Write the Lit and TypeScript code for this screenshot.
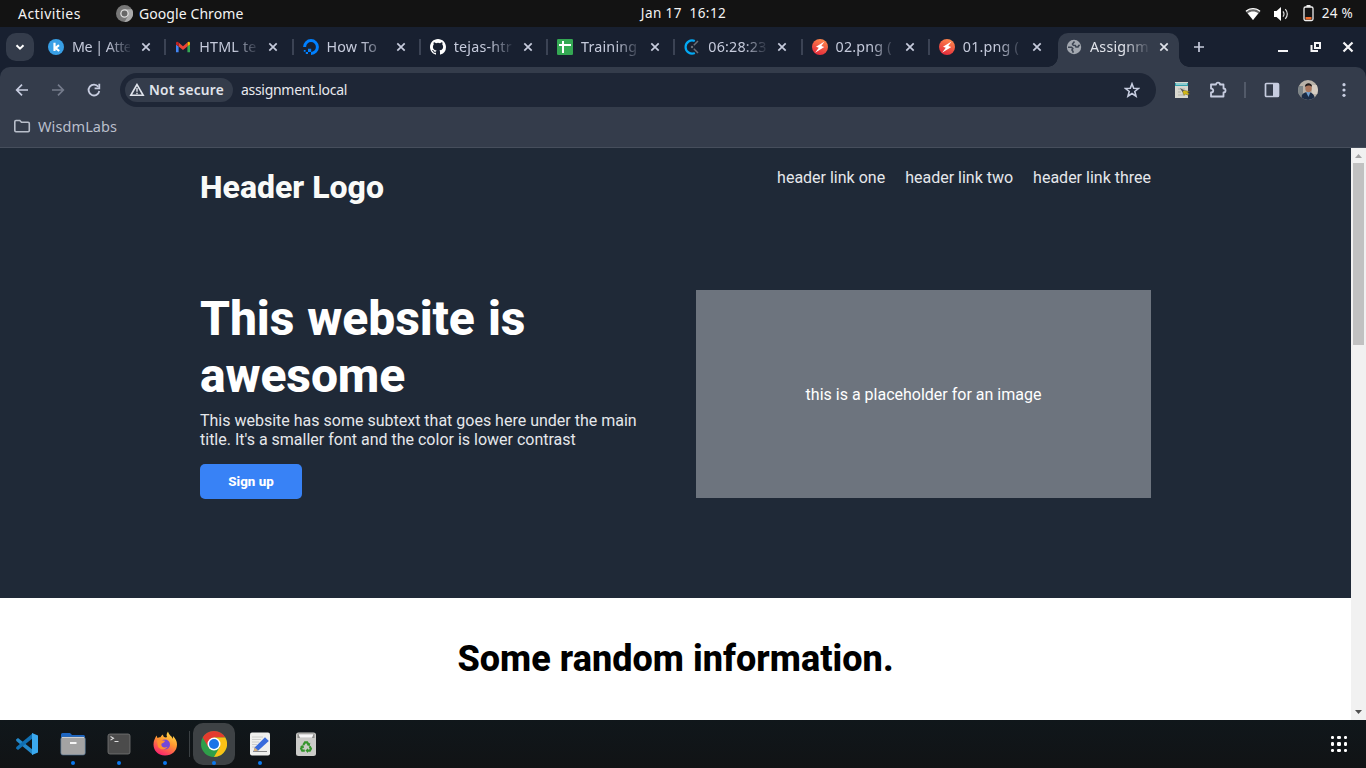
import { LitElement, html, css, svg, nothing } from "lit";
import { customElement } from "lit/decorators.js";
import { classMap } from "lit/directives/class-map.js";

const bolt = svg`<defs><linearGradient id="bo" x1=".7" y1="0" x2=".3" y2="1"><stop offset="0" stop-color="#ff8a4c"/><stop offset="1" stop-color="#e2263a"/></linearGradient></defs>
  <circle cx="8" cy="8" r="8" fill="url(#bo)"/><path d="M12.500 2.400 4 7.800l2.800 1-3.700 4.900 9.200-5.600-3-1.100z" fill="#fff"/>`;

const favicons: Record<string, unknown> = {
  keka: svg`<circle cx="8" cy="8" r="8" fill="#389fe6"/><path d="M6.5 3.800v8.200M11 6.200 7.600 9l3.600 3" fill="none" stroke="#fff" stroke-width="2.200"/>`,
  gmail: svg`<path d="M1 13.2h2.600V7.500L1 5.400z" fill="#4285f4"/><path d="M12.400 13.200H15V5.400l-2.600 2.100z" fill="#34a853"/><path d="M12.400 3.600v3.900L15 5.400V4.200c0-1.700-1.700-2-2.600-.6z" fill="#fbbc04"/><path d="M3.600 3.600 8 7.200l4.400-3.600v3.900L8 11 3.600 7.500z" fill="#ea4335"/><path d="M1 4.200v1.200l2.600 2.100V3.600C2.700 2.200 1 2.500 1 4.200z" fill="#c5221f"/>`,
  ocean: svg`<path d="M1.600 8A6.400 6.400 0 1 1 8 14.400" fill="none" stroke="#0080ff" stroke-width="3"/><path d="M5 9.800h3.200V13H5zM2.800 13H5v2H2.800zM.8 11h1.800v1.800H.8z" fill="#0080ff"/>`,
  github: svg`<path fill="#fff" d="M8 0C3.580 0 0 3.580 0 8c0 3.540 2.290 6.530 5.470 7.590.4.070.550-.170.550-.380 0-.190-.010-.820-.010-1.490-2.010.370-2.530-.490-2.690-.940-.090-.230-.480-.940-.820-1.130-.280-.150-.680-.520-.010-.530.630-.010 1.080.580 1.230.820.720 1.210 1.870.870 2.330.660.070-.520.280-.870.510-1.070-1.780-.2-3.640-.890-3.640-3.950 0-.870.310-1.590.820-2.150-.080-.2-.360-1.020.080-2.120 0 0 .670-.210 2.200.820a7.600 7.600 0 0 1 4 0c1.530-1.040 2.200-.820 2.200-.820.440 1.100.160 1.920.080 2.120.510.560.820 1.270.820 2.150 0 3.070-1.870 3.750-3.650 3.950.290.250.540.730.540 1.480 0 1.070-.010 1.930-.010 2.200 0 .210.150.460.550.380A8.010 8.010 0 0 0 16 8c0-4.420-3.580-8-8-8z"/>`,
  sheets: svg`<rect width="16" height="16" rx="1.300" fill="#34a853"/><path d="M2 6h12M6 2v12" stroke="#fff" stroke-width="2" fill="none"/>`,
  clockify: svg`<path d="M10.800 2.100A6.500 6.500 0 1 0 10.800 13.900" fill="none" stroke="#03a9f4" stroke-width="2.200"/><path d="M9.800 6.200 14 2M9.800 9.800 14 14" stroke="#6d7078" stroke-width="1.500"/><circle cx="8" cy="8" r="1.200" fill="#6d7078"/>`,
  bolt,
  globe: svg`<circle cx="8" cy="8" r="7.200" fill="#a3a8b0"/><path d="M8.500 2.500 6.500 5l.8 1.200 2 .3.700 1.500h2l.8-1.500 1-.3M2 8.300h3.500l1.300 1.200L6 11l1 1.500v1.200" fill="none" stroke="#3d4553" stroke-width="1.600"/>`,
};

const tabs = [
  { icon: "keka", title: "Me | Atte", tight: true },
  { icon: "gmail", title: "HTML te" },
  { icon: "ocean", title: "How To" },
  { icon: "github", title: "tejas-htr" },
  { icon: "sheets", title: "Training" },
  { icon: "clockify", title: "06:28:23" },
  { icon: "bolt", title: "02.png (" },
  { icon: "bolt", title: "01.png (" },
  { icon: "globe", title: "Assignm", active: true },
];

const cross = svg`<path d="m4.300 4.300 7.400 7.400m0-7.400-7.400 7.400" fill="none" stroke="currentColor" stroke-width="1.700"/>`;

@customElement("system-bar")
class SystemBar extends LitElement {
  static styles = css`
    :host { display: grid; grid-template-columns: 1fr auto 1fr; align-items: center; height: 27px; background: #131313; color: #f4f4f4; font: 400 14px/27px "Noto Sans", sans-serif; }
    .left, .right { display: flex; align-items: center; }
    .left { padding-left: 18px; }
    .activities { width: 98px; letter-spacing: 0.450px; }
    .app { margin-left: 6px; letter-spacing: 0.080px; }
    .clock { white-space: pre; font-size: 13.500px; letter-spacing: 0.400px; padding-left: 1px; }
    .right { justify-content: flex-end; padding-right: 13px; }
    .wifi { margin-right: 12px; }
    .sound { margin-right: 14px; }
    .battery { margin-right: 8px; }
    .percent { font-size: 13.500px; letter-spacing: 0.300px; }
    svg { display: block; }
  `;
  render() {
    return html`
      <div class="left">
        <span class="activities">Activities</span>
        <svg width="17" height="17" viewBox="0 0 16 16"><circle cx="8" cy="8" r="8" fill="#777"/><path d="M8 4h7a8 8 0 0 1-7 12l3.500-6z" fill="#aaa"/><circle cx="8" cy="8" r="4" fill="#ddd"/><circle cx="8" cy="8" r="2.800" fill="#666"/></svg>
        <span class="app">Google Chrome</span>
      </div>
      <span class="clock">Jan 17  16:12</span>
      <div class="right">
        <svg class="wifi" width="16" height="14" viewBox="0 0 16 14"><path d="M8 13 .5 4.200C4.500-.200 11.500-.200 15.500 4.200z" fill="#666"/><path d="M8 13 2.700 6.200c3-2.400 7.600-2.400 10.600 0z" fill="#fff"/><path d="M1 4.200c4-3.500 10-3.500 14 0" stroke="#fff" stroke-width="1.300" fill="none"/></svg>
        <svg class="sound" width="16" height="16" viewBox="0 0 16 16"><path d="M1 5h2.500L8 1v14l-4.500-4H1z" fill="#fff"/><path d="M10 5.300q2 2.700 0 5.400M12.300 3.200q4 4.800 0 9.600" stroke="#ddd" stroke-width="1.200" fill="none"/></svg>
        <svg class="battery" width="11" height="17" viewBox="0 0 11 17"><path d="M3.500 0h4v2h-4z" fill="#eee"/><rect x="1" y="2" width="9" height="13.500" rx="1.500" fill="none" stroke="#eee" stroke-width="1.300"/><path d="M2.500 12h6v2.500h-6z" fill="#f06a2a"/></svg>
        <span class="percent">24 %</span>
      </div>`;
  }
}

@customElement("browser-chrome")
class BrowserChrome extends LitElement {
  static styles = css`
    :host { display: block; background: #182030; color: #c6cbdc; font: 400 14.300px/20px "Noto Sans", sans-serif; }
    svg { display: block; flex: none; }
    .strip { display: flex; height: 40px; padding-left: 6px; align-items: center; }
    .search { width: 28px; height: 28px; border-radius: 10px; background: #343c4b; display: grid; place-items: center; color: #fff; }
    .tabs { display: flex; margin-left: 2px; }
    .tab { box-sizing: border-box; width: 127.250px; height: 40px; padding: 0 9px 0 12px; display: flex; align-items: center; position: relative; }
    .title { width: 58px; margin-left: 8px; overflow: hidden; white-space: nowrap; letter-spacing: 0.200px; -webkit-mask-image: linear-gradient(90deg, #000 60%, transparent 105%); mask-image: linear-gradient(90deg, #000 60%, transparent 105%); }
    .tight { letter-spacing: -0.500px; }
    .tab .close { margin-left: 8px; }
    .lined::after { content: ""; position: absolute; top: 12px; right: -3px; width: 2px; height: 16px; background: #3b4354; }
    .active { color: #e0e3ea; }
    .active::before { content: ""; position: absolute; z-index: 0; top: 6px; bottom: 0; left: 4px; right: 2px; border-radius: 10px 10px 0 0; background: #343c4b; }
    .active::after { content: ""; position: absolute; z-index: 0; bottom: 0; left: -6px; right: -8px; height: 10px; background: radial-gradient(circle at 0 0, transparent 9.500px, #343c4b 10px) left / 10px 10px no-repeat, radial-gradient(circle at 100% 0, transparent 9.500px, #343c4b 10px) right / 10px 10px no-repeat; }
    .active > * { z-index: 1; }
    .plus { margin-left: 10px; }
    .window { margin-left: auto; display: flex; gap: 16.500px; padding-right: 10px; color: #f4f4f6; }
    .toolbar { display: flex; align-items: center; height: 46px; padding: 0 4px; background: #343c4b; border-radius: 10px 10px 0 0; color: #c7cde0; }
    .cell { width: 36px; display: grid; place-items: center; }
    .dim { color: #747b8b; }
    .omnibox { box-sizing: border-box; width: 1036px; height: 34px; border-radius: 17px; background: #1e2636; margin: 0 8px; padding: 0 16px 0 5px; display: flex; align-items: center; }
    .secure { box-sizing: border-box; width: 108px; height: 24px; border-radius: 12px; background: #343c4b; display: flex; align-items: center; gap: 4px; padding-left: 4px; color: #e1e4ec; font-weight: 600; font-size: 13.700px; letter-spacing: 0.250px; white-space: nowrap; }
    .url { margin-left: 8px; color: #e8e9ee; font-size: 14px; letter-spacing: -0.300px; }
    .star { margin-left: auto; }
    .rule { width: 18px; height: 16px; background: linear-gradient(#525a69, #525a69) center / 2px 16px no-repeat; }
    .avatar { width: 20px; height: 20px; border-radius: 50%; overflow: hidden; }
    .bookmarks { display: flex; align-items: center; height: 35px; padding: 0 13px 8px; box-sizing: border-box; gap: 7px; background: #343c4b; border-bottom: 1px solid #464e5c; color: #b9bfcb; font-size: 14.500px; letter-spacing: 0.100px; }
  `;
  render() {
    return html`
      <div class="strip">
        <div class="search"><svg width="16" height="16" viewBox="0 0 16 16"><path d="m4.500 6.200 3.500 3.500 3.500-3.500" fill="none" stroke="currentColor" stroke-width="2"/></svg></div>
        <div class="tabs">
          ${tabs.map((t, i) => html`
            <div class=${classMap({ tab: true, active: !!t.active, lined: i < 7 })}>
              <svg width="16" height="16" viewBox="0 0 16 16">${favicons[t.icon]}</svg>
              <span class=${classMap({ title: true, tight: !!t.tight })}>${t.title}</span>
              <svg class="close" width="16" height="16" viewBox="0 0 16 16">${cross}</svg>
            </div>`)}
        </div>
        <svg class="plus" width="16" height="16" viewBox="0 0 16 16"><path d="M8 3v10M3 8h10" stroke="currentColor" stroke-width="1.700"/></svg>
        <div class="window">
          <svg width="16" height="16" viewBox="0 0 16 16"><path d="M3 12h10" stroke="currentColor" stroke-width="2"/></svg>
          <svg width="16" height="16" viewBox="0 0 16 16"><path d="M7 4h5v5H7zM3.500 6v6H10" fill="none" stroke="currentColor" stroke-width="2"/></svg>
          <svg width="16" height="16" viewBox="0 0 16 16"><path d="m3.500 3.500 9 9m0-9-9 9" stroke="currentColor" stroke-width="2.200"/></svg>
        </div>
      </div>
      <div class="toolbar">
        <div class="cell"><svg width="16" height="16" viewBox="0 0 16 16"><path d="M14 8H3m5-5.300L2.700 8 8 13.300" fill="none" stroke="currentColor" stroke-width="1.700"/></svg></div>
        <div class="cell dim"><svg width="16" height="16" viewBox="0 0 16 16"><path d="M2 8h11M8 2.700 13.300 8 8 13.300" fill="none" stroke="currentColor" stroke-width="1.700"/></svg></div>
        <div class="cell"><svg width="16" height="16" viewBox="0 0 16 16"><path d="M13.300 9A5.400 5.400 0 1 1 12.300 4.800" fill="none" stroke="currentColor" stroke-width="1.800"/><path d="M13.300 1.800v4.600H8.600" fill="none" stroke="currentColor" stroke-width="1.800"/></svg></div>
        <div class="omnibox">
          <div class="secure"><svg width="16" height="16" viewBox="0 0 16 16"><path d="M8 2.500 1.800 13.300h12.400z" fill="none" stroke="currentColor" stroke-width="1.600"/><path d="M8 6v3.800m0 1v1.500" stroke="currentColor" stroke-width="1.400"/></svg>Not secure</div>
          <span class="url">assignment.local</span>
          <svg class="star" width="16" height="16" viewBox="0 0 16 16"><path d="m8 1.800 1.700 4.400 4.700.3-3.600 3 1.200 4.600L8 11.500l-4 2.600 1.200-4.600-3.600-3 4.700-.3z" fill="none" stroke="currentColor" stroke-width="1.600"/></svg>
        </div>
        <div class="cell"><svg width="16" height="16" viewBox="0 0 16 16"><path d="M1 0h13v16H1z" fill="#d9d8cf"/><path d="M1 1h13v3H1z" fill="#35a3ae"/><path d="M2 2h11" stroke="#e9f4ef"/><path d="M4 7h7M4 10h3M4 13h5" stroke="#b3b3ab"/><path d="m8 8 7.500 1.500-2 1 2 1.500-2 1-2-1-1.500 1.500z" fill="#d4ba14" stroke="#695d2b" stroke-width=".5"/><path d="m6 6 4 2.200-1.500 1.800z" fill="#555"/></svg></div>
        <div class="cell"><svg width="18" height="18" viewBox="0 0 18 18"><path d="M2 3.500h5C7 1 11 1 11 3.500h3.500v4c2.700 0 2.700 4 0 4v4H2v-4c3-.200 3-4 0-4z" fill="none" stroke="currentColor" stroke-width="1.800" stroke-linejoin="round"/></svg></div>
        <div class="rule"></div>
        <div class="cell"><svg width="16" height="16" viewBox="0 0 16 16"><rect x="1.500" y="1.500" width="13" height="13" rx="1" fill="none" stroke="currentColor" stroke-width="1.700"/><path d="M9 2h5v12H9z" fill="currentColor"/></svg></div>
        <div class="cell"><svg class="avatar" width="20" height="20" viewBox="0 0 20 20"><path d="M0 0h20v20H0z" fill="#b9b2a8"/><path d="M0 6h5v10H0z" fill="#7d8588"/><path d="M14 5h6v9h-6z" fill="#d6cdc2"/><path d="M3 20c0-6 3-8 7-8s7 3 7 8z" fill="#1b2c46"/><path d="m8 12 2.500 5 2-5z" fill="#6f9fd0"/><ellipse cx="10.500" cy="8" rx="3.200" ry="4.300" fill="#a9745a"/><path d="M7 7c-.5-5 7.500-5 7 0-1-2-5-2-7 0z" fill="#211b1b"/></svg></div>
        <div class="cell"><svg width="16" height="16" viewBox="0 0 16 16" fill="currentColor"><circle cx="8" cy="2.700" r="1.600"/><circle cx="8" cy="8" r="1.600"/><circle cx="8" cy="13.300" r="1.600"/></svg></div>
      </div>
      <div class="bookmarks">
        <svg width="18" height="16" viewBox="0 0 18 16"><path d="M1.800 3.800c0-1 .3-1.300 1.200-1.300h3.800l1.700 1.800h6.600c.8 0 1.200.4 1.200 1.200v7c0 .8-.4 1.200-1.200 1.200H3c-.8 0-1.200-.4-1.200-1.200z" fill="none" stroke="currentColor" stroke-width="1.600"/></svg>
        <span>WisdmLabs</span>
      </div>`;
  }
}

@customElement("landing-page")
class LandingPage extends LitElement {
  static styles = css`
    :host { display: flex; height: 572px; overflow: hidden; background: #fff; font: 16px/19px Roboto, sans-serif; }
    .page { flex: 1; }
    .top { box-sizing: border-box; height: 450px; padding: 20px 200px 0; background: #1f2937; color: #e5e7eb; }
    header { display: flex; justify-content: space-between; height: 122px; }
    .logo { font-weight: 800; font-size: 32px; line-height: 38px; color: #f9faf8; }
    nav { display: flex; gap: 20px; }
    .hero { display: flex; gap: 40px; }
    .copy { width: 456px; }
    h1 { margin: 0; font-weight: 800; font-size: 48px; line-height: 57px; letter-spacing: -0.100px; word-spacing: 1.300px; color: #fff; width: 400px; }
    p { margin: 7px 0 15px; }
    button { display: block; width: 102px; height: 35px; border: 0; border-radius: 5px; background: #3882f6; color: #fff; font: 800 13.333px/15px Roboto, sans-serif; padding: 0; }
    .placeholder { width: 455px; height: 208px; display: grid; place-items: center; background: #6d747e; color: #fff; }
    h2 { margin: 40px 0 0; text-align: center; font-weight: 800; font-size: 36px; line-height: 42px; letter-spacing: 0.040px; color: #000; }
    .scrollbar { width: 15px; display: flex; flex-direction: column; align-items: center; background: #f1f1f1; }
    .thumb { width: 11px; height: 182px; background: #c1c1c1; }
    .up { width: 15px; height: 15px; }
    .down { width: 15px; height: 15px; margin-top: auto; }
  `;
  render() {
    return html`
      <div class="page">
        <div class="top">
          <header><div class="logo">Header Logo</div><nav><span>header link one</span><span>header link two</span><span>header link three</span></nav></header>
          <div class="hero">
            <div class="copy">
              <h1>This website is awesome</h1>
              <p>This website has some subtext that goes here under the main title. It's a smaller font and the color is lower contrast</p>
              <button>Sign up</button>
            </div>
            <div class="placeholder">this is a placeholder for an image</div>
          </div>
        </div>
        <h2>Some random information.</h2>
      </div>
      <div class="scrollbar">
        <svg class="up" viewBox="0 0 15 15"><path d="M4 10h7L7.500 6z" fill="#a3a3a3"/></svg>
        <div class="thumb"></div>
        <svg class="down" viewBox="0 0 15 15"><path d="M4 5h7L7.500 9z" fill="#505050"/></svg>
      </div>`;
  }
}

const apps = [
  { running: false, art: svg`<path d="m2 8.500 2-1.500 15 12V24L2.300 10z" fill="#2489ca"/><path d="m2 17.500 2 1.500L19 7V2L2.300 16z" fill="#1070b3"/><path d="m18 2 6 2.500v17L18 24z" fill="#3ba9ef"/>` },
  { running: true, art: svg`<path d="M1 3.500Q1 2 2.500 2H10l2 2h11.500q1.500 0 1.500 1.500V10H1z" fill="#1d66c2"/><rect x=".8" y="6" width="24.500" height="18" rx="2" fill="#a3a3a3" stroke="#466b91" stroke-width=".6"/><path d="M2 6.500h22" stroke="#cfcfcf"/><path d="M10 11h6.500v2H10z" fill="#f5f5f5"/>` },
  { running: true, art: svg`<rect x="2" y="3" width="22" height="20" rx="2" fill="#4b4b4b" stroke="#777" stroke-width=".8"/><path d="m4.500 5.500 3 1.800-3 1.800M8.500 10.500h4" fill="none" stroke="#ddd" stroke-width="1.100"/>` },
  { running: true, art: svg`<defs><linearGradient id="fx" x1=".8" y1="0" x2=".3" y2="1"><stop offset="0" stop-color="#ffe34a"/><stop offset=".45" stop-color="#ff9730"/><stop offset="1" stop-color="#fb1f70"/></linearGradient></defs><path d="M13 24.500C5.500 24.500 1.500 19 1.500 13.500c0-4 1.500-6 3-9L5.500 7c1-.7 2-1 3-.8C9.300 4.500 10 4 11 3.500c0 2 1 3 3 3l1-.5c-1-2 0-4 1-5.500 1 4 4 4.500 5 7.500V5c2.500 2.500 4 5 4 8.500 0 6.500-5 11-12 11z" fill="url(#fx)"/><circle cx="13" cy="13.500" r="5" fill="#7548d8"/><path d="M5 9.500c3-1.500 4.500 0 8 .3-.5 2-2.500 2-3.500 3-.8 3 3 5 6 3-1 3-7.500 4-9.700-.5z" fill="#ff9230"/>` },
  { running: true, current: true, art: svg`<circle cx="13" cy="13" r="13" fill="#2f9e49"/><path d="M1.740 6.500A13 13 0 0 1 24.260 6.500H13L7.370 16.250z" fill="#e33b2e"/><path d="M24.260 6.500A13 13 0 0 1 13 26l5.630-9.750L13 6.500z" fill="#fbc116"/><circle cx="13" cy="13" r="6.500" fill="#fff"/><circle cx="13" cy="13" r="5" fill="#1a73e8"/>` },
  { running: true, art: svg`<rect x="3" y="1.500" width="20" height="23" rx="2" fill="#f0f0ed"/><path d="M5 6h11M5 8.500h9M5 11h7M5 13.500h5M5 16h4" stroke="#c4c4c1" stroke-width=".8"/><path d="M6 20.500h14" stroke="#888"/><path d="m6.500 20.500 1.200-4L18 6.300l3.800 3.800L11.300 19.500z" fill="#386bdc"/><path d="m6.500 20.500 1.200-4 3.600 3z" fill="#d8b27b"/>` },
  { running: false, art: svg`<rect x="3" y="1.500" width="20" height="23.500" rx="2.500" fill="#cbcbc8"/><path d="M4.500 2.500h17V7h-17z" fill="#8d8d8b"/><path d="M5.500 3.200h15L19 6.800H7z" fill="#f7f7f7"/><g fill="none" stroke="#35942d" stroke-width="2.200"><path d="m10.300 14 1.700-2.600h2.200l1.400 2.300"/><path d="m16.600 15.300 1.300 2.400-1.100 2h-2.600"/><path d="M11.800 19.700H9.200L8.100 17.600l1.300-2.300"/></g><path d="m17.300 11.800-.6 3.500-3-1.400zM15 17.300v4.600l-2.600-2.300zM7 15.200l3.300-1.200.8 3.200z" fill="#35942d"/>` },
];

@customElement("desktop-dock")
class DesktopDock extends LitElement {
  static styles = css`
    :host { display: flex; align-items: center; height: 48px; padding: 0 14px 0 4px; box-sizing: border-box; background: linear-gradient(#10171b, #111315); }
    .app { position: relative; width: 46px; height: 48px; display: grid; place-items: center; }
    .current::before { content: ""; position: absolute; inset: 3px 2px; border-radius: 10px; background: #3e4245; }
    .current { margin-left: 3px; }
    .app svg { z-index: 1; display: block; }
    .dot { position: absolute; z-index: 2; left: 21px; top: 41px; width: 4px; height: 4px; border-radius: 50%; background: #0b78ee; }
    .grid { margin-left: auto; margin-right: 5px; display: grid; grid-template-columns: repeat(3, 3.500px); gap: 3px; }
    .grid i { width: 3.500px; height: 3.500px; border-radius: 1.200px; background: #fff; }
    .line { width: 1px; height: 26px; margin: 0 -2px 0 1px; background: #3b4043; }
  `;
  render() {
    return html`
      ${apps.map((a) => html`
        ${a.current ? html`<div class="line"></div>` : nothing}
        <div class=${classMap({ app: true, current: !!a.current })}>
          <svg width="26" height="26" viewBox="0 0 26 26">${a.art}</svg>
          ${a.running ? html`<span class="dot"></span>` : nothing}
        </div>`)}
      <div class="grid">${Array.from({ length: 9 }, () => html`<i></i>`)}</div>`;
  }
}

@customElement("app-root")
class AppRoot extends LitElement {
  static styles = css`
    :host { display: block; width: 1366px; height: 768px; overflow: hidden; }
  `;
  render() {
    return html`<system-bar></system-bar><browser-chrome></browser-chrome><landing-page></landing-page><desktop-dock></desktop-dock>`;
  }
}
